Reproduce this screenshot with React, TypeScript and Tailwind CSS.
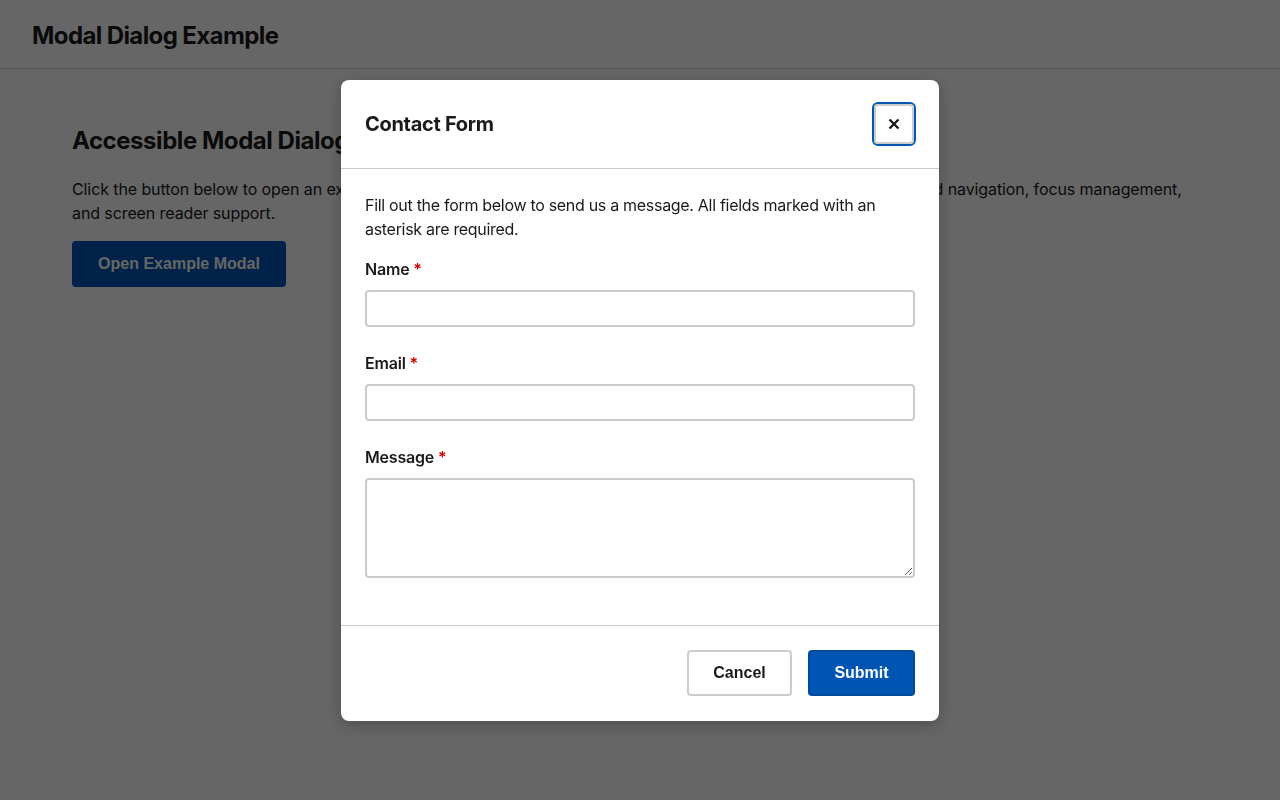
import React from "react";

export default function App() {
  const font = { fontFamily: "Inter, 'Noto Sans', sans-serif" };
  return (
    <div className="relative min-h-[800px] bg-white text-[#1a1a1a] font-['Inter',sans-serif]">
      <header className="h-[69px] border-b border-[#cccccc] px-8 pt-[3px] flex items-center">
        <h1 className="text-[24px] font-bold leading-8 tracking-[-0.6px]">Modal Dialog Example</h1>
      </header>
      <main className="px-[72px] pt-[56px]">
        <h2 className="text-[24px] font-bold leading-8 tracking-[-0.45px]">Accessible Modal Dialog Demo</h2>
        <p className="mt-[20px] text-[16px] leading-6 tracking-[-0.1px]">
          Click the button below to open an example modal dialog. The dialog demonstrates accessible patterns with keyboard navigation, focus management, and screen reader support.
        </p>
        <button className="mt-4 h-[46px] w-[214px] rounded-[4px] bg-[#0055b3] text-white font-['Liberation_Sans',Arial,sans-serif] font-bold text-[16px]">
          Open Example Modal
        </button>
      </main>

      <div className="fixed inset-0 bg-black/60 flex items-center justify-center">
        <div
          role="dialog"
          className="w-[598px] h-[641px] bg-white rounded-[8px] shadow-[0_4px_16px_rgba(0,0,0,0.25)] flex flex-col"
          style={font}
        >
          <div className="h-[89px] border-b border-[#cccccc] px-6 flex items-center justify-between">
            <h3 className="text-[20px] font-bold leading-7 tracking-[-0.3px] text-[#1a1a1a]">Contact Form</h3>
            <button className="w-[44px] h-[44px] rounded-[6px] border-2 border-[#0056b3] flex items-center justify-center p-0 mr-[-1px]">
              <span className="w-[40px] h-[40px] rounded-[4px] border-2 border-[#cccccc] flex items-center justify-center">
                <svg width="12" height="12" viewBox="0 0 12 12">
                  <path d="M1.5 1.5 L10.5 10.5 M10.5 1.5 L1.5 10.5" stroke="#1a1a1a" strokeWidth="2.4" strokeLinecap="butt" />
                </svg>
              </span>
            </button>
          </div>
          <div className="flex-1 px-6 pt-6">
            <p className="text-[16px] leading-6 tracking-[-0.3px] text-[#1a1a1a]">
              Fill out the form below to send us a message. All fields marked with an asterisk are required.
            </p>
            <div className="mt-4">
              <label className="block text-[16px] font-semibold leading-6 tracking-[-0.2px] mb-[9px]">
                Name <span className="text-[#cc0000]">*</span>
              </label>
              <input className="block w-full h-[37px] rounded-[4px] border-2 border-[#cccccc] bg-white" />
            </div>
            <div className="mt-[24px]">
              <label className="block text-[16px] font-semibold leading-6 tracking-[-0.2px] mb-[9px]">
                Email <span className="text-[#cc0000]">*</span>
              </label>
              <input className="block w-full h-[37px] rounded-[4px] border-2 border-[#cccccc] bg-white" />
            </div>
            <div className="mt-[24px]">
              <label className="block text-[16px] font-semibold leading-6 tracking-[-0.2px] mb-[9px]">
                Message <span className="text-[#cc0000]">*</span>
              </label>
              <textarea className="block w-full h-[100px] rounded-[4px] border-2 border-[#cccccc] bg-white" />
            </div>
          </div>
          <div className="h-[96px] border-t border-[#cccccc] px-6 flex items-center justify-end gap-4">
            <button className="w-[105px] h-[46px] rounded-[4px] border-2 border-[#cccccc] bg-white text-[#1a1a1a] font-['Liberation_Sans',Arial,sans-serif] font-bold text-[16px]">
              Cancel
            </button>
            <button className="w-[107px] h-[46px] rounded-[4px] border-2 border-[#004a9c] bg-[#0055b3] text-white font-['Liberation_Sans',Arial,sans-serif] font-bold text-[16px]">
              Submit
            </button>
          </div>
        </div>
      </div>
    </div>
  );
}
